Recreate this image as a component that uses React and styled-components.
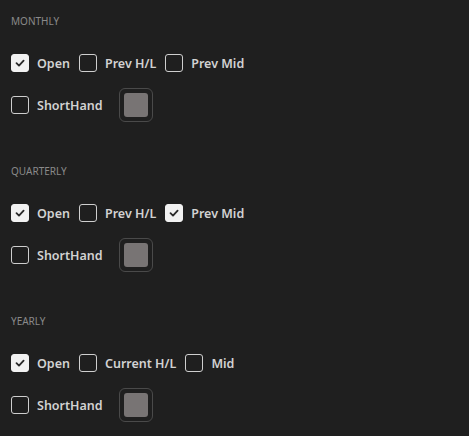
import React, { useState } from 'react';
import styled, { createGlobalStyle } from 'styled-components';

const GlobalStyle = createGlobalStyle`
  html, body {
    margin: 0;
    padding: 0;
    background: #1f1f1f;
  }
  body {
    font-family: "Noto Sans", "Open Sans", sans-serif;
  }
`;

const Panel = styled.div`
  width: 469px;
  height: 436px;
  background: #1f1f1f;
  padding: 14px 11px 0;
  box-sizing: border-box;
  display: flex;
  flex-direction: column;
  gap: 42px;
`;

const Section = styled.div`
  display: flex;
  flex-direction: column;
`;

const Heading = styled.div`
  font-size: 10px;
  line-height: 14px;
  color: #8a8a8a;
  text-transform: uppercase;
  margin-bottom: 26px;
`;

const Row = styled.div`
  display: flex;
  align-items: center;
  gap: 9px;
  height: ${({ $tall }) => ($tall ? '34px' : '18px')};
  margin-top: ${({ $tall }) => ($tall ? '16px' : '0')};
`;

const Option = styled.label`
  display: flex;
  align-items: center;
  gap: 8px;
  cursor: pointer;
  font-size: 12.5px;
  font-weight: 600;
  color: #d2d2d2;
  user-select: none;
`;

const Box = styled.span`
  width: 18px;
  height: 18px;
  box-sizing: border-box;
  border-radius: 3px;
  border: 1px solid ${({ $on }) => ($on ? '#f2f2f2' : '#cfcfcf')};
  background: ${({ $on }) => ($on ? '#f2f2f2' : 'transparent')};
  display: flex;
  align-items: center;
  justify-content: center;
`;

const Swatch = styled.button`
  width: 34px;
  height: 34px;
  margin-left: 7px;
  padding: 0;
  box-sizing: border-box;
  border: 1px solid #4a4a4a;
  border-radius: 6px;
  background: transparent;
  display: flex;
  align-items: center;
  justify-content: center;
  cursor: pointer;
`;

const SwatchFill = styled.span`
  width: 24px;
  height: 24px;
  border-radius: 3px;
  background: #787474;
`;

const Check = ({ label, checked, onToggle }) => (
  <Option onClick={onToggle}>
    <Box $on={checked}>
      {checked && (
        <svg width="12" height="12" viewBox="0 0 12 12">
          <polyline points="2.5,6.2 5,8.6 9.6,3.6" fill="none" stroke="#2a2a2a" strokeWidth="1.8" strokeLinecap="round" strokeLinejoin="round" />
        </svg>
      )}
    </Box>
    {label}
  </Option>
);

const initial = [
  { title: 'Monthly', opts: [['Open', true], ['Prev H/L', false], ['Prev Mid', false]], short: false },
  { title: 'Quarterly', opts: [['Open', true], ['Prev H/L', false], ['Prev Mid', true]], short: false },
  { title: 'Yearly', opts: [['Open', true], ['Current H/L', false], ['Mid', false]], short: false },
];

const App = () => {
  const [sections, setSections] = useState(initial);

  const toggle = (si, oi) => {
    setSections((prev) =>
      prev.map((s, i) => {
        if (i !== si) return s;
        if (oi === 'short') return { ...s, short: !s.short };
        return { ...s, opts: s.opts.map((o, j) => (j === oi ? [o[0], !o[1]] : o)) };
      })
    );
  };

  return (
    <>
      <GlobalStyle />
      <Panel>
        {sections.map((s, si) => (
          <Section key={s.title}>
            <Heading>{s.title}</Heading>
            <Row>
              {s.opts.map(([label, on], oi) => (
                <Check key={label} label={label} checked={on} onToggle={() => toggle(si, oi)} />
              ))}
            </Row>
            <Row $tall>
              <Check label="ShortHand" checked={s.short} onToggle={() => toggle(si, 'short')} />
              <Swatch>
                <SwatchFill />
              </Swatch>
            </Row>
          </Section>
        ))}
      </Panel>
    </>
  );
};

export default App;
